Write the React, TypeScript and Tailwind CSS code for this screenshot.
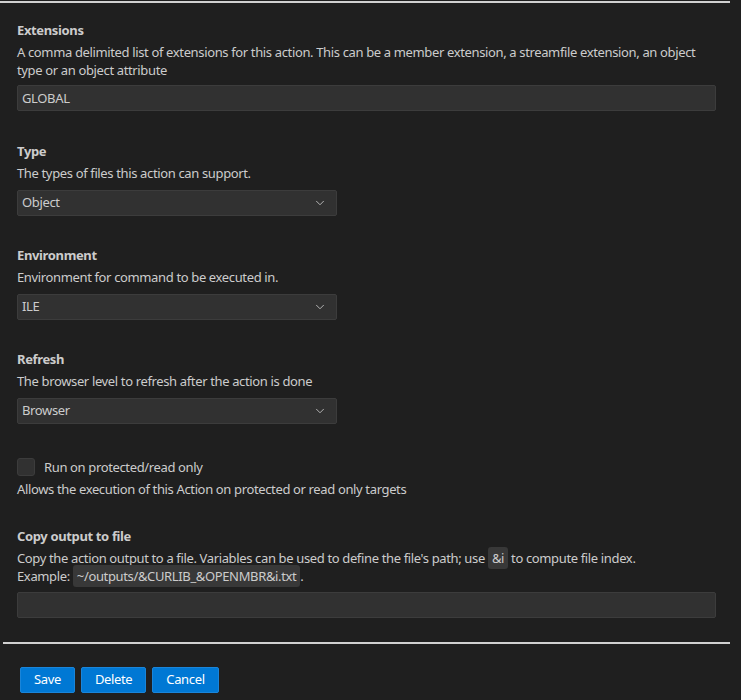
import { ChevronDown } from 'lucide-react';

const font = { fontFamily: '"Noto Sans", "Open Sans", sans-serif' };

function Label({ children }: { children: React.ReactNode }) {
  return <div className="text-[13px] leading-[18px] font-bold text-[#cccccc]">{children}</div>;
}

function Help({ children }: { children: React.ReactNode }) {
  return <div className="mt-1 text-[13px] leading-[18px] text-[#cccccc]">{children}</div>;
}

function TextField({ value, className = 'mt-[6px]' }: { value?: string; className?: string }) {
  return (
    <div className={`${className} h-[26px] w-[699px] rounded-[2px] border border-[#3c3c3c] bg-[#313131] px-1 text-[13px] leading-[24px] text-[#cccccc]`}>
      {value}
    </div>
  );
}

function Dropdown({ value }: { value: string }) {
  return (
    <div className="mt-2 flex h-[26px] w-[320px] items-center justify-between rounded-[2px] border border-[#3c3c3c] bg-[#313131] pl-1 pr-[9px] text-[13px] text-[#cccccc]">
      <span>{value}</span>
      <ChevronDown className="h-[14px] w-[14px] text-[#c5c5c5]" strokeWidth={1.5} />
    </div>
  );
}

function Code({ children }: { children: React.ReactNode }) {
  return <span className="rounded-[3px] bg-[#383838] px-[4px] py-[2px]">{children}</span>;
}

export default function App() {
  return (
    <div className="min-h-[700px] w-[741px] bg-[#1f1f1f] pt-px tracking-[-0.36px]" style={font}>
      <div className="h-[2px] w-[730px] bg-[#d0d0d0]" />

      <div className="pl-[17px]">
        {/* Extensions */}
        <div className="mt-[18px]">
          <Label>Extensions</Label>
          <Help>
            A comma delimited list of extensions for this action. This can be a member extension, a streamfile extension, an object
            <br />
            type or an object attribute
          </Help>
          <TextField value="GLOBAL" />
        </div>

        {/* Type */}
        <div className="mt-[31px]">
          <Label>Type</Label>
          <Help>The types of files this action can support.</Help>
          <Dropdown value="Object" />
        </div>

        {/* Environment */}
        <div className="mt-[30px]">
          <Label>Environment</Label>
          <Help>Environment for command to be executed in.</Help>
          <Dropdown value="ILE" />
        </div>

        {/* Refresh */}
        <div className="mt-[30px]">
          <Label>Refresh</Label>
          <Help>The browser level to refresh after the action is done</Help>
          <Dropdown value="Browser" />
        </div>

        {/* Run on protected */}
        <div className="mt-[34px]">
          <div className="flex items-center gap-[9px] text-[13px] leading-[18px] text-[#cccccc]">
            <div className="h-[18px] w-[18px] rounded-[3px] border border-[#3c3c3c] bg-[#313131]" />
            <span>Run on protected/read only</span>
          </div>
          <Help>Allows the execution of this Action on protected or read only targets</Help>
        </div>

        {/* Copy output */}
        <div className="mt-[29px]">
          <Label>Copy output to file</Label>
          <Help>
            Copy the action output to a file. Variables can be used to define the file's path; use <Code>&amp;i</Code> to compute file index.
            <br />
            Example: <Code>~/outputs/&amp;CURLIB_&amp;OPENMBR&amp;i.txt</Code>.
          </Help>
          <TextField className="mt-[7px]" />
        </div>
      </div>

      <div className="ml-[3px] mt-[24px] h-[2px] w-[727px] bg-[#d0d0d0]" />

      <div className="mt-[23px] flex gap-[6px] pl-[20px]">
        {['Save', 'Delete', 'Cancel'].map((b) => (
          <button
            key={b}
            className="h-[26px] rounded-[2px] border border-[#1a85d9] bg-[#0078d4] px-[13px] text-[13px] text-white"
          >
            {b}
          </button>
        ))}
      </div>
    </div>
  );
}
